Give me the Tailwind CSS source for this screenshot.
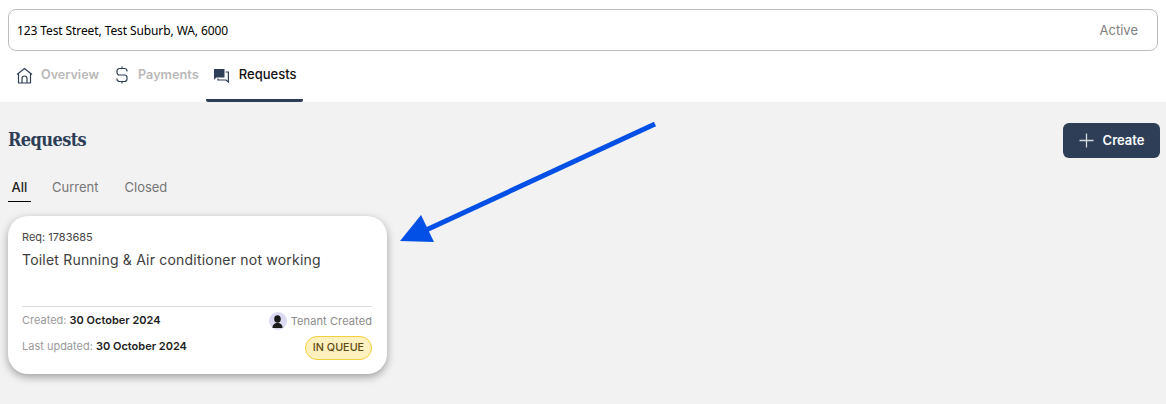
<!DOCTYPE html>
<html lang="en">
<head>
    <meta charset="UTF-8">
    <meta name="viewport" content="width=device-width, initial-scale=1.0">
    <title>Requests</title>
    <script src="https://cdn.jsdelivr.net/npm/@tailwindcss/browser@4"></script>
</head>
<body class="relative h-[404px] overflow-hidden bg-[#f2f2f2] font-[Inter,sans-serif]">
    <!-- Property header -->
    <div class="bg-white h-[102px] px-2 pt-[9px]">
        <div class="h-[42px] border border-[#bdbdbd] rounded-lg flex items-center justify-between pl-2 pr-[19px]">
            <span class="text-[12px] text-black font-['Noto_Sans',sans-serif] tracking-[-0.1px] translate-y-px">123 Test Street, Test Suburb, WA, 6000</span>
            <span class="text-[13px] text-[#808080] translate-y-px">Active</span>
        </div>
        <div class="flex h-[51px]">
            <a class="flex items-center pl-2 pr-[8px] pb-[2px] gap-2 text-[12.6px] font-semibold text-[#b9b9b9]">
                <svg width="17" height="17" viewBox="0 0 17 17" fill="none" stroke="#2d3e56" stroke-width="1.2"><path d="M1 7.500 8.500 1.500 16 7.500"/><path d="M2.500 6.500V16H14.500V6.500"/><path d="M6 16V11.500a2.500 2.500 0 0 1 5 0V16"/></svg>
                Overview
            </a>
            <a class="flex items-center pl-[9px] pr-[7px] pb-[3px] gap-[10px] text-[12.7px] font-semibold text-[#b9b9b9]">
                <svg width="12" height="18" viewBox="0 0 12 18" fill="none" stroke="#2d3e56" stroke-width="1.2"><path d="M11 5.500V5A2.500 2.500 0 0 0 8.500 2.500H3.500A2.500 2.500 0 0 0 1 5V6.500A2.500 2.500 0 0 0 3.500 9H8.500A2.500 2.500 0 0 1 11 11.500V13A2.500 2.500 0 0 1 8.500 15.500H3.500A2.500 2.500 0 0 1 1 13V12.500M6 0.500V2.500M6 15.500V17.500"/></svg>
                Payments
            </a>
            <a class="flex items-center w-[97px] justify-center gap-[10px] pl-px text-[13px] font-medium text-[#111] border-b-[3px] border-[#2d3e56] rounded-b-[2px]">
                <svg width="16" height="15" viewBox="0 0 16 15"><path fill="#2d3e56" d="M1 1H11.500V9.500H3.500L1 11.500Z"/><path fill="none" stroke="#2d3e56" stroke-width="1.200" d="M12.500 4H15.400V14L13 12H5V10.500"/></svg>
                Requests
            </a>
        </div>
    </div>

    <main class="pl-2 pr-[6px]">
        <div class="flex items-center justify-between pt-[21px]">
            <h1 class="text-[18px] font-bold text-[#2d3e56] font-['DejaVu_Serif',serif] font-stretch-condensed tracking-[-0.6px] leading-[35px] -translate-y-px">Requests</h1>
            <button class="w-[97px] h-[35px] rounded-md bg-[#2d3e56] text-white text-[13px] font-semibold flex items-center justify-center gap-[9px]">
                <svg width="15" height="15" viewBox="0 0 15 15" stroke="#d5d9de" stroke-width="1.300"><path d="M7.500 0.500V14.500M0.500 7.500H14.500"/></svg>
                Create
            </button>
        </div>

        <div class="flex mt-[12px] text-[13px] text-[#757575]">
            <span class="w-[23px] h-[32px] pt-[4px] flex items-center justify-center font-medium text-[#222] border-b border-black">All</span>
            <span class="h-[32px] pt-[4px] ml-[21px] flex items-center">Current</span>
            <span class="h-[32px] pt-[4px] ml-[26px] flex items-center">Closed</span>
        </div>

        <!-- Request card -->
        <div class="relative mt-[14px] w-[379px] h-[158px] bg-white rounded-[20px] shadow-[0_3px_8px_rgba(0,0,0,0.35)] pl-[14px] pr-[15px] pt-[14px]">
            <p class="text-[11px] leading-[15px] text-[#444]">Req: 1783685</p>
            <p class="mt-[6px] text-[14px] leading-[18px] text-[#3d3d3d] tracking-[0.2px]">Toilet Running &amp; Air conditioner not working</p>
            <div class="mt-[37px] border-t border-[#dcdcdc] flex justify-between pt-[5px]">
                <div class="text-[11px] text-[#9a9a9a]">
                    <p class="leading-[15px] mt-[1px]">Created: <span class="font-semibold text-[#222]">30 October 2024</span></p>
                    <p class="leading-[15px] mt-[11px]">Last updated: <span class="font-semibold text-[#222]">30 October 2024</span></p>
                </div>
                <div class="flex flex-col items-end">
                    <div class="flex items-center gap-[4px] text-[11px] text-[#8a8a8a] tracking-[0.1px]">
                        <span class="w-[18px] h-[18px] rounded-full bg-[#dcdaf2] flex items-center justify-center">
                            <svg width="13" height="13" viewBox="0 0 13 13" fill="#1a1a1a"><ellipse cx="6.500" cy="4" rx="3.300" ry="3.800"/><path d="M1.500 13C1.500 9.500 3.500 8 6.500 8S11.500 9.500 11.500 13Z"/></svg>
                        </span>
                        Tenant Created
                    </div>
                    <span class="mt-[6px] h-[24px] w-[67px] rounded-full bg-[#fff1bf] border border-[#f5cf3c] flex items-center justify-center text-[10.8px] font-medium text-[#5e4a10]">IN QUEUE</span>
                </div>
            </div>
        </div>
    </main>

    <!-- Annotation arrow -->
    <svg class="absolute left-0 top-0 pointer-events-none" width="1166" height="404" viewBox="0 0 1166 404">
        <path d="M655 124 424 231" stroke="#0350e6" stroke-width="5" fill="none"/>
        <path d="M400 241 421 215 434 242Z" fill="#0350e6"/>
    </svg>
</body>
</html>
